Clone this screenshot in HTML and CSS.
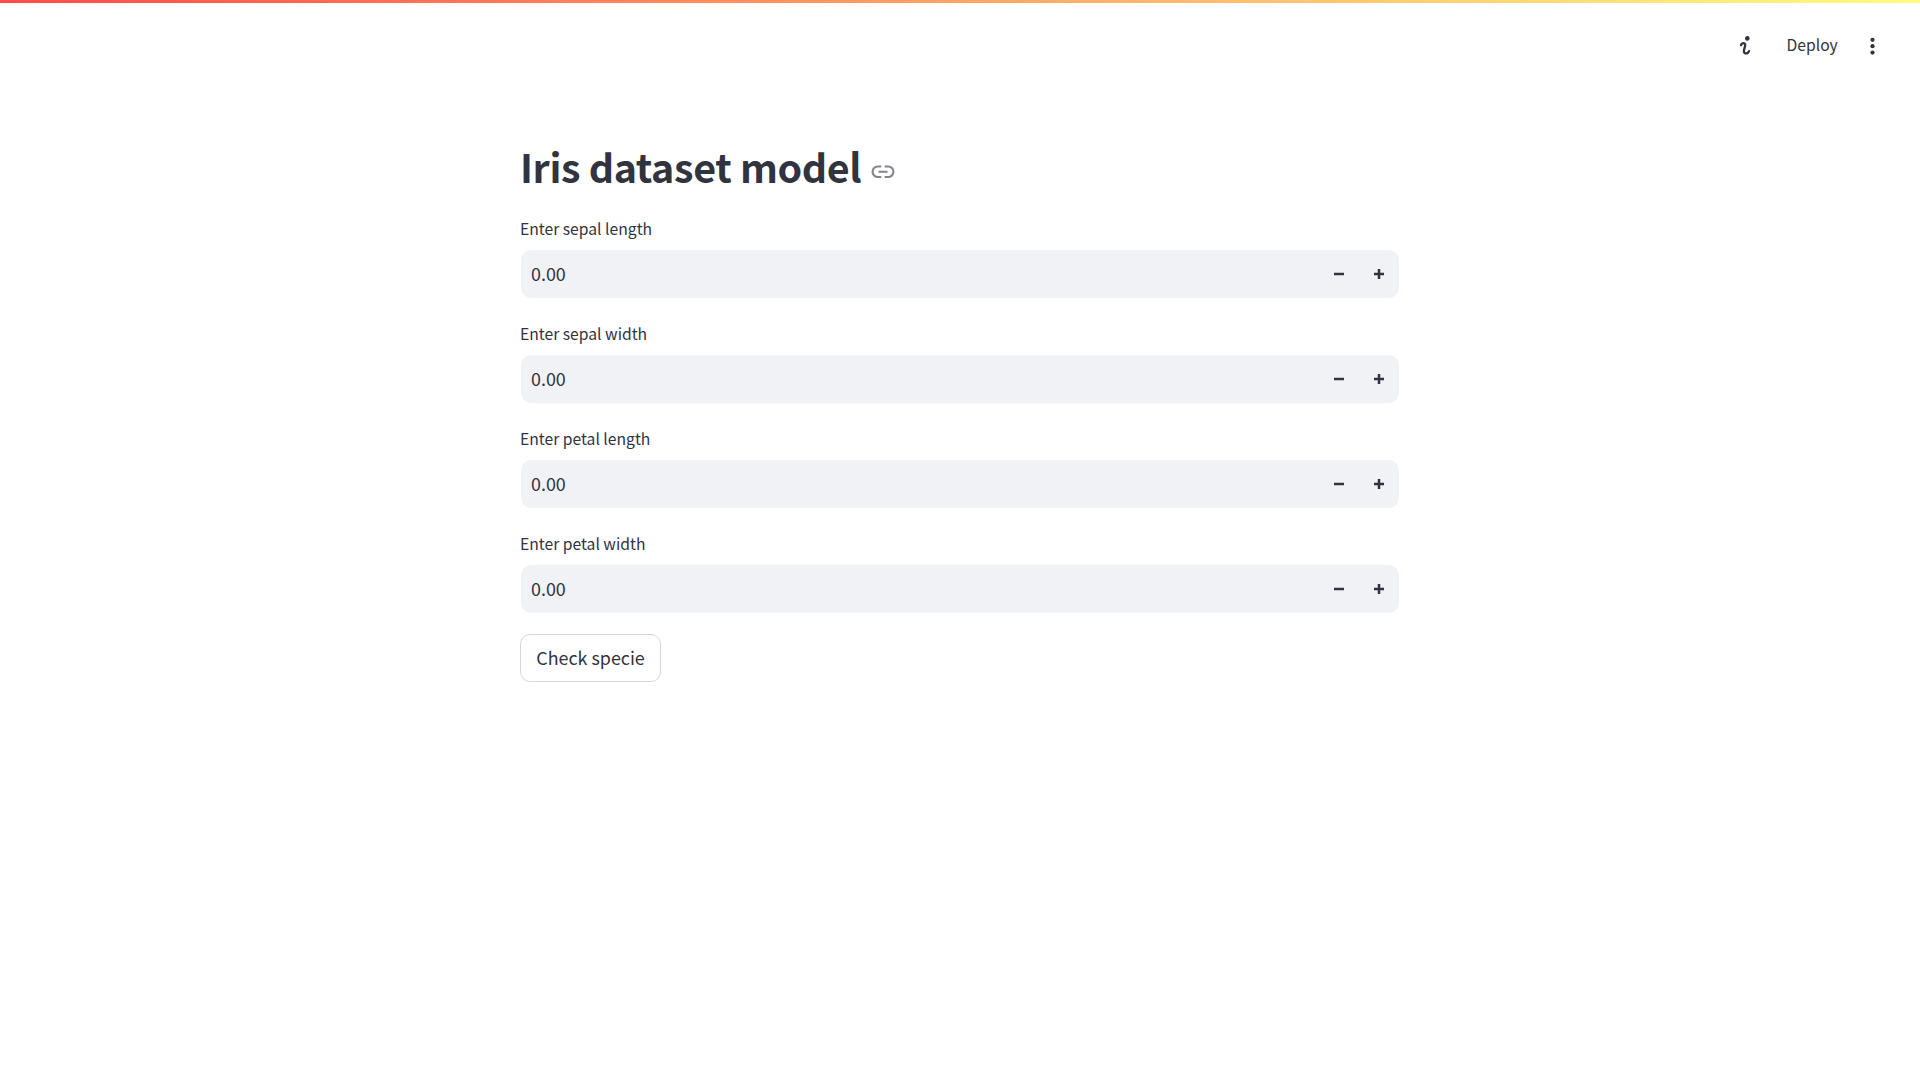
FILE: index.html
```html
<!DOCTYPE html>
<html lang="en">
<head>
<meta charset="utf-8">
<title>Iris dataset model</title>
<link rel="stylesheet" href="styles.css">
</head>
<body>
<div class="decoration"></div>
<header class="toolbar">
  <svg class="info" width="20" height="20" viewBox="0 0 20 20"><circle cx="12.3" cy="2.4" r="2.3"/><path d="M6 9.2C6.4 7.2 8.8 6.6 9.9 7.9C10.6 8.8 10.1 10.4 9.5 12.2C8.8 14.3 8.4 16.8 10.2 17.3C12.1 17.8 13.4 16.7 14 15.1"/></svg>
  <span class="deploy">Deploy</span>
  <svg class="menu" width="20" height="20" viewBox="0 0 20 20"><circle cx="10.5" cy="3.8" r="2.1"/><circle cx="10.5" cy="10.2" r="2.1"/><circle cx="10.5" cy="16.6" r="2.1"/></svg>
</header>
<main class="content">
  <h1 class="title"><span>Iris dataset model</span><svg class="link" width="24" height="14" viewBox="0 0 24 14"><path d="M10.3 1.5H6.8A5.2 5.2 0 0 0 6.8 12H10.3M13.7 1.5H17.2A5.2 5.2 0 0 1 17.2 12H13.7M7.5 6.8H16.5"/></svg></h1>
  <div class="field">
    <label class="label">Enter sepal length</label>
    <div class="number"><span class="value">0.00</span><svg class="step" width="10" height="10" viewBox="0 0 10 10"><path d="M0 5H10"/></svg><svg class="step" width="10" height="10" viewBox="0 0 10 10"><path d="M0 5H10M5 0V10"/></svg></div>
  </div>
  <div class="field">
    <label class="label">Enter sepal width</label>
    <div class="number"><span class="value">0.00</span><svg class="step" width="10" height="10" viewBox="0 0 10 10"><path d="M0 5H10"/></svg><svg class="step" width="10" height="10" viewBox="0 0 10 10"><path d="M0 5H10M5 0V10"/></svg></div>
  </div>
  <div class="field">
    <label class="label">Enter petal length</label>
    <div class="number"><span class="value">0.00</span><svg class="step" width="10" height="10" viewBox="0 0 10 10"><path d="M0 5H10"/></svg><svg class="step" width="10" height="10" viewBox="0 0 10 10"><path d="M0 5H10M5 0V10"/></svg></div>
  </div>
  <div class="field">
    <label class="label">Enter petal width</label>
    <div class="number"><span class="value">0.00</span><svg class="step" width="10" height="10" viewBox="0 0 10 10"><path d="M0 5H10"/></svg><svg class="step" width="10" height="10" viewBox="0 0 10 10"><path d="M0 5H10M5 0V10"/></svg></div>
  </div>
  <button class="check">Check specie</button>
</main>
</body>
</html>
```
FILE: styles.css
```css
* { box-sizing: border-box; }
body {
  margin: 0;
  min-height: 100vh;
  background: #fff;
  color: #31333f;
  font-family: "Noto Sans CJK SC", "Noto Sans", sans-serif;
}
.decoration { height: 3px; background: linear-gradient(90deg, #ff4b4b, #fffd80); }
.toolbar {
  display: flex;
  align-items: center;
  justify-content: flex-end;
  height: 85px;
  padding-right: 38px;
}
.info { margin-right: 31.5px; fill: #31333f; }
.info path { fill: none; stroke: #31333f; stroke-width: 2.3; stroke-linecap: round; }
.deploy { width: 50.5px; margin-right: 25px; padding-bottom: 1px; font-size: 15.7px; line-height: 24px; white-space: nowrap; }
.menu { fill: #31333f; }
.content { width: 880px; margin: 0 auto; padding-top: 51px; }
.title {
  display: flex;
  align-items: center;
  gap: 9.5px;
  height: 54px;
  margin: 0 0 22px;
  font-size: 39.4px;
  font-weight: 700;
  line-height: 54px;
  letter-spacing: -0.38px;
  white-space: nowrap;
}
.link { margin-top: 12px; fill: none; stroke: #83848b; stroke-width: 2.1; }
.field { height: 105px; }
.label { display: block; height: 35px; font-size: 15.7px; line-height: 28px; }
.number {
  display: flex;
  align-items: center;
  gap: 30px;
  width: 878px;
  height: 48px;
  margin-left: 1px;
  padding: 0 15px 0 10px;
  border-radius: 10px;
  background: #f0f2f6;
}
.value { flex: 1; padding-bottom: 2px; font-size: 17.9px; line-height: 28px; }
.step { fill: none; stroke: #31333f; stroke-width: 2.5; }
.check {
  display: block;
  width: 141px;
  height: 48px;
  margin-top: -1px;
  padding: 0 0 2px;
  border: 1px solid #d6d6d9;
  border-radius: 10px;
  background: #fff;
  color: inherit;
  font: 17.9px/28px "Noto Sans CJK SC", "Noto Sans", sans-serif;
}
```
